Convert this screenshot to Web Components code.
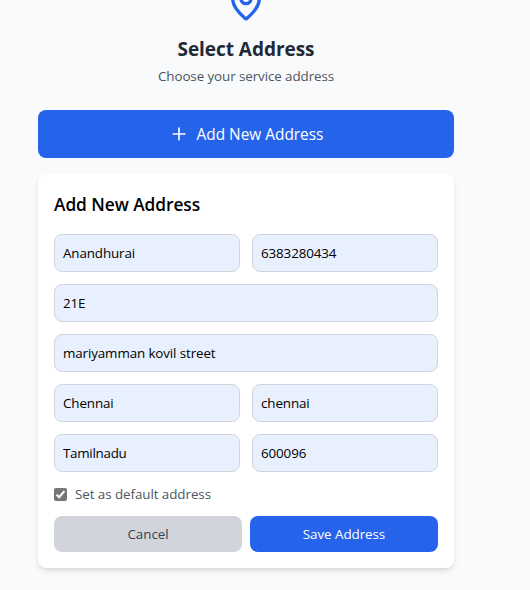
<!DOCTYPE html>
<html lang="en">
<head>
<meta charset="utf-8">
<title>Select Address</title>
<style>
html,body{margin:0;background:#f9fafb;overflow:hidden}
body{height:590px;font-family:"Open Sans","Noto Sans",sans-serif;color:#000}
</style>
</head>
<body>
<address-page></address-page>
<script>
const define = (name, html) => customElements.define(name, class extends HTMLElement {
  constructor() {
    super();
    this.attachShadow({ mode: 'open' }).innerHTML = html;
  }
});

define('page-header', `
<style>
:host{display:flex;flex-direction:column;align-items:center;margin-bottom:24px}
svg{display:block;width:40px;height:40px;margin-bottom:12px;flex:none}
.title{box-sizing:border-box;height:28px;padding-top:1px;font-size:19px;line-height:28px;font-weight:700;color:#1f2937;letter-spacing:-.04px;white-space:nowrap}
.sub{font-size:13.4px;line-height:20px;color:#4b5563;margin-top:4px;letter-spacing:-.09px;white-space:nowrap}
</style>
<svg viewBox="0 0 24 24" fill="none" stroke="#2563eb" stroke-width="2" stroke-linecap="round" stroke-linejoin="round"><path d="M20 10c0 4.993-5.539 10.193-7.399 11.799a1 1 0 0 1-1.202 0C9.539 20.193 4 14.993 4 10a8 8 0 0 1 16 0"/><circle cx="12" cy="10" r="3"/></svg>
<div class="title"><slot name="title"></slot></div>
<div class="sub"><slot name="subtitle"></slot></div>`);

define('add-button', `
<style>
:host{display:flex;align-items:center;justify-content:center;height:48px;border-radius:8px;background:#2563eb;color:#fff;margin-bottom:16px;font-size:15.4px;line-height:24px}
svg{width:20px;height:20px;margin-right:8px}
.label{padding-top:2px}
</style>
<svg viewBox="0 0 24 24" fill="none" stroke="currentColor" stroke-width="2" stroke-linecap="round"><path d="M5 12h14M12 5v14"/></svg><div class="label"><slot></slot></div>`);

define('text-field', `
<style>
:host{display:flex;align-items:center;box-sizing:border-box;height:38px;padding:0 8px;border:1px solid #d1d5db;border-radius:8px;background:#e8f0fe;font-size:13.4px;line-height:20px;letter-spacing:-.12px;white-space:nowrap}
:host([wide]){grid-column:span 2}
:host([tight]){letter-spacing:-.28px}
</style><slot></slot>`);

define('check-option', `
<style>
:host{display:flex;align-items:center;height:20px;margin:12px 0;font-size:13.4px;line-height:20px;letter-spacing:-.07px;color:#4b5563}
svg{width:13px;height:13px;margin-right:8px}
</style>
<svg viewBox="0 0 13 13"><rect width="13" height="13" rx="2" fill="#767676"/><path d="M2.6 6.8 5.1 9.3 10.4 3.1" fill="none" stroke="#fff" stroke-width="2.1"/></svg><slot></slot>`);

define('action-button', `
<style>
:host{display:flex;align-items:center;justify-content:center;flex:1;height:36px;border-radius:8px;background:#d1d5db;color:#374151;font-size:13.4px;line-height:20px;letter-spacing:-.06px}
:host([primary]){background:#2563eb;color:#fff}
</style><slot></slot>`);

define('address-card', `
<style>
:host{display:block;box-sizing:border-box;padding:16px;background:#fff;border-radius:8px;box-shadow:0 4px 6px -1px rgba(0,0,0,.1),0 2px 4px -2px rgba(0,0,0,.1)}
.heading{box-sizing:border-box;height:28px;padding-top:1px;font-size:17.3px;line-height:28px;font-weight:600;margin-bottom:16px;letter-spacing:-.04px}
.fields{display:grid;grid-template-columns:1fr 1fr;gap:12px}
.actions{display:flex;gap:8px}
</style>
<div class="heading"><slot name="heading"></slot></div>
<div class="fields"><slot></slot></div>
<slot name="option"></slot>
<div class="actions"><slot name="actions"></slot></div>`);

define('address-page', `
<style>
:host{display:block;width:416px;margin-left:38px;margin-top:-18px}
</style>
<page-header><span slot="title">Select Address</span><span slot="subtitle">Choose your service address</span></page-header>
<add-button><span>Add New Address</span></add-button>
<address-card>
<span slot="heading">Add New Address</span>
<text-field><span>Anandhurai</span></text-field><text-field><span>6383280434</span></text-field>
<text-field wide><span>21E</span></text-field>
<text-field wide><span>mariyamman kovil street</span></text-field>
<text-field><span>Chennai</span></text-field><text-field><span>chennai</span></text-field>
<text-field tight><span>Tamilnadu</span></text-field><text-field><span>600096</span></text-field>
<check-option slot="option"><span>Set as default address</span></check-option>
<action-button slot="actions"><span>Cancel</span></action-button>
<action-button slot="actions" primary><span>Save Address</span></action-button>
</address-card>`);
</script>
</body>
</html>
